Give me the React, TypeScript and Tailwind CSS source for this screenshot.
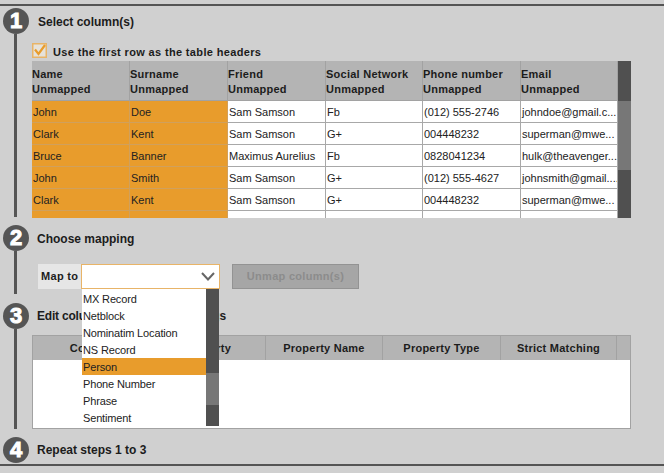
const columns = ['Name', 'Surname', 'Friend', 'Social Network', 'Phone number', 'Email'];

const rows = [
  ['John', 'Doe', 'Sam Samson', 'Fb', '(012) 555-2746', 'johndoe@gmail.c...'],
  ['Clark', 'Kent', 'Sam Samson', 'G+', '004448232', 'superman@mwe...'],
  ['Bruce', 'Banner', 'Maximus Aurelius', 'Fb', '0828041234', 'hulk@theavenger...'],
  ['John', 'Smith', 'Sam Samson', 'G+', '(012) 555-4627', 'johnsmith@gmail....'],
  ['Clark', 'Kent', 'Sam Samson', 'G+', '004448232', 'superman@mwe...'],
  ['', '', '', '', '', ''],
];

const entityTypes = ['MX Record', 'Netblock', 'Nominatim Location', 'NS Record', 'Person', 'Phone Number', 'Phrase', 'Sentiment'];

const gridCols = 'grid grid-cols-[98px_98px_98px_97px_98px_97px]';

function Badge({ n }: { n: number }) {
  return (
    <div className="flex h-[26px] w-[26px] shrink-0 items-center justify-center rounded-full bg-[#555555] text-[22px] font-bold leading-none text-white [-webkit-text-stroke:1px_white]">
      {n}
    </div>
  );
}

function Rail({ n, height }: { n: number; height?: string }) {
  return (
    <div className="flex w-[32px] shrink-0 flex-col pl-[3px]">
      <Badge n={n} />
      {height && <div className={`ml-[11px] w-[3px] bg-[#555555] ${height}`} />}
    </div>
  );
}

function DataTable() {
  return (
    <div className="flex h-[157px] w-[599px] overflow-hidden">
      <div className="w-[586px]">
        <div className={`${gridCols} h-[40px] bg-[#b4b4b4]`}>
          {columns.map((c) => (
            <div key={c} className="border-r border-b border-[#a2a2a2] pt-[6px] text-[11px] font-bold leading-[15px] tracking-[0.25px] text-[#1c1c1c]">
              <div>{c}</div>
              <div>Unmapped</div>
            </div>
          ))}
        </div>
        {rows.map((row, i) => (
          <div key={i} className={gridCols}>
            {row.map((cell, j) => (
              <div
                key={j}
                className={`h-[22px] overflow-hidden whitespace-nowrap border-r border-b pl-[1px] text-[11px] leading-[23px] text-[#222222] ${
                  j < 2 ? 'border-[#d0a05c] bg-[#e89c2c]' : 'border-[#a8a8a8] bg-white'
                }`}
              >
                {cell}
              </div>
            ))}
          </div>
        ))}
      </div>
      <div className="flex w-[13px] flex-col bg-[#505050]">
        <div className="h-[40px]" />
        <div className="h-[69px] bg-[#777777]" />
      </div>
    </div>
  );
}

function MapDropdown() {
  return (
    <div className="absolute top-[24px] left-0 z-10 flex h-[137px] w-[137px]">
      <div className="w-[124px] bg-white pt-[1px]">
        {entityTypes.map((t) => (
          <div key={t} className={`h-[17px] pl-[1px] text-[11px] leading-[18px] tracking-[-0.15px] text-[#222222] ${t === 'Person' ? 'bg-[#e89c2c]' : ''}`}>
            {t}
          </div>
        ))}
      </div>
      <div className="flex w-[13px] flex-col bg-[#505050]">
        <div className="h-[84px]" />
        <div className="h-[32px] bg-[#777777]" />
      </div>
    </div>
  );
}

function MappingTable() {
  const heads = [
    ['Column', 'w-[117px]'],
    ['Property', 'w-[116px]'],
    ['Property Name', 'w-[117px]'],
    ['Property Type', 'w-[118px]'],
    ['Strict Matching', 'w-[116px]'],
  ];
  return (
    <div className="h-[94px] w-[599px] border border-[#a2a2a2] bg-white">
      <div className="flex h-[24px] bg-[#b4b4b4]">
        {heads.map(([label, width]) => (
          <div key={label} className={`${width} border-r border-[#a2a2a2] text-center text-[11px] font-bold leading-[24px] tracking-[0.25px] text-[#1c1c1c]`}>
            {label}
          </div>
        ))}
      </div>
    </div>
  );
}

export default function App() {
  return (
    <div className="h-[473px] w-[664px] overflow-hidden bg-[#d0d0d0] pt-[4px] font-['Liberation_Sans',Arial,sans-serif]">
      <div className="h-[2px] bg-[#555555]" />

      <section className="mt-[2px] flex h-[217px]">
        <Rail n={1} height="h-[183px]" />
        <div>
          <h2 className="h-[26px] pl-[6px] text-[12px] font-bold leading-[28px] text-[#1c1c1c]">Select column(s)</h2>
          <div className="mt-[9px] flex h-[18px] items-start gap-[6px]">
            <svg width="15" height="15" viewBox="0 0 15 15" className="shrink-0">
              <rect x="0.75" y="0.75" width="13.5" height="13.5" fill="#e6e2da" stroke="#e8b468" strokeWidth="1.5" />
              <path d="M3 6.5 L6.5 11 L13 2" fill="none" stroke="#e89c2c" strokeWidth="2.2" />
            </svg>
            <span className="text-[11px] font-bold leading-[18px] tracking-[0.35px] text-[#1c1c1c]">Use the first row as the table headers</span>
          </div>
          <DataTable />
        </div>
      </section>

      <section className="flex h-[78px]">
        <Rail n={2} height="h-[43px]" />
        <div>
          <h2 className="h-[26px] pl-[5px] text-[12px] font-bold leading-[28px] text-[#1c1c1c]">Choose mapping</h2>
          <div className="mt-[13px] flex pl-[6px]">
            <div className="flex h-[25px] w-[43px] items-center bg-[#e6e6e6] pl-[3px] text-[11px] font-bold tracking-[0.3px] text-[#1c1c1c]">Map to</div>
            <div className="relative h-[25px] w-[139px] border border-[#e8b468] bg-white">
              <svg width="14" height="9" viewBox="0 0 14 9" className="absolute top-[7px] right-[4px]">
                <path d="M1 1 L7 7.5 L13 1" fill="none" stroke="#666666" strokeWidth="2" />
              </svg>
              <MapDropdown />
            </div>
            <button className="ml-[12px] h-[25px] w-[127px] border border-[#939393] bg-[#a6a6a6] text-[11px] font-bold tracking-[0.3px] text-[#8c8c8c]">
              Unmap column(s)
            </button>
          </div>
        </div>
      </section>

      <section className="flex h-[134px]">
        <Rail n={3} height="h-[100px]" />
        <div>
          <h2 className="h-[26px] pl-[5px] text-[12px] font-bold leading-[26px] tracking-[-0.2px] text-[#1c1c1c]">Edit column to property mappings</h2>
          <div className="mt-[6px]">
            <MappingTable />
          </div>
        </div>
      </section>

      <section className="flex h-[27px]">
        <Rail n={4} />
        <h2 className="h-[26px] pl-[5px] text-[12px] font-bold leading-[26px] text-[#1c1c1c]">Repeat steps 1 to 3</h2>
      </section>

      <div className="h-[2px] bg-[#555555]" />
    </div>
  );
}
